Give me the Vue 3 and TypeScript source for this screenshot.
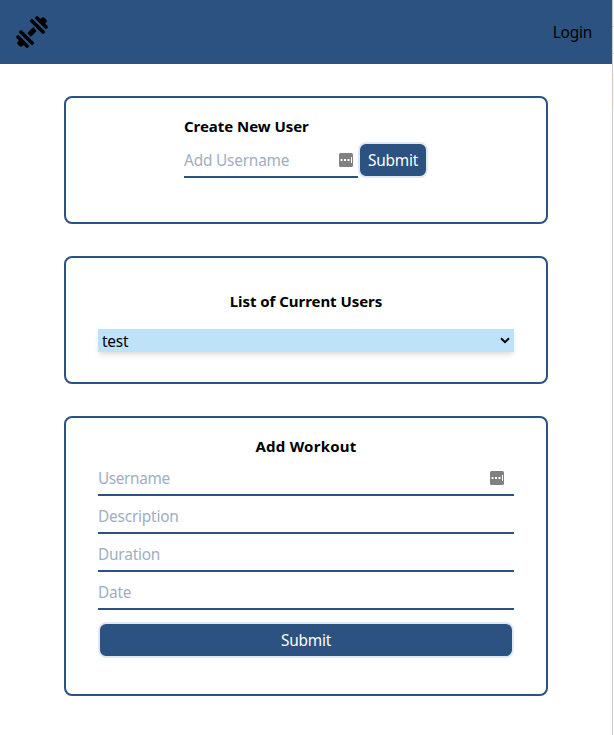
<script setup lang="ts">
import { ref, reactive } from 'vue'

type WorkoutKey = 'username' | 'description' | 'duration' | 'date'
interface Field {
  key: WorkoutKey
  label: string
}

const fields: Field[] = [
  { key: 'username', label: 'Username' },
  { key: 'description', label: 'Description' },
  { key: 'duration', label: 'Duration' },
  { key: 'date', label: 'Date' },
]
const users = ref<string[]>(['test'])
const selected = ref('test')
const newUser = ref('')
const workout = reactive<Record<WorkoutKey, string>>({
  username: '',
  description: '',
  duration: '',
  date: '',
})

function addUser(): void {
  const name = newUser.value.trim()
  if (name) users.value.push(name)
  newUser.value = ''
}
</script>

<template>
  <div class="page">
    <div class="content">
      <header class="nav">
        <svg class="logo" viewBox="0 0 32 32" fill="none" stroke="#000" stroke-linecap="round">
          <path stroke-width="3.6" d="M15.9 4.9 27.1 16.1M21 2 30 11M4.9 15.9 16.1 27.1M2 21 11 30" />
          <path stroke-width="3" stroke-linejoin="round" fill="#000" d="M24 5 27.2 2.7 29.3 4.8 27 8ZM8 27 4.8 29.3 2.7 27.2 5 24Z" />
          <path stroke-width="1.6" fill="#000" stroke-linejoin="round" d="M12.4 17.1 17.1 12.4 19.6 14.9 14.9 19.6Z" />
        </svg>
        <a class="login">Login</a>
      </header>

      <main class="cards">
        <section class="card create">
          <form class="create-form" @submit.prevent="addUser">
            <h2 class="title title-create">Create New User</h2>
            <div class="row">
              <div class="field">
                <input v-model="newUser" class="input" placeholder="Add Username" />
                <svg class="badge" viewBox="0 0 14 14">
                  <rect width="14" height="14" rx="1.5" fill="#808080" />
                  <path fill="#fff" d="M1.5 6h2v2h-2zM5 6h2v2H5zM8.5 6h2v2h-2zM12 4h1v6h-1z" />
                </svg>
              </div>
              <button class="button">Submit</button>
            </div>
          </form>
        </section>

        <section class="card users">
          <h2 class="title title-users">List of Current Users</h2>
          <div class="select-wrap">
            <select v-model="selected" class="select">
              <option v-for="user in users" :key="user">{{ user }}</option>
            </select>
            <svg class="chevron" viewBox="0 0 10 7" fill="none" stroke="#000" stroke-width="2">
              <path d="M1 1.3 5 5.1 9 1.3" />
            </svg>
          </div>
        </section>

        <section class="card workout">
          <h2 class="title title-workout">Add Workout</h2>
          <form @submit.prevent>
            <div v-for="field in fields" :key="field.key" class="field">
              <input v-model="workout[field.key]" class="input" :placeholder="field.label" />
              <svg v-if="field.key === 'username'" class="badge" viewBox="0 0 14 14">
                <rect width="14" height="14" rx="1.5" fill="#808080" />
                <path fill="#fff" d="M1.5 6h2v2h-2zM5 6h2v2H5zM8.5 6h2v2h-2zM12 4h1v6h-1z" />
              </svg>
            </div>
            <button class="button wide">Submit</button>
          </form>
        </section>
      </main>
    </div>
    <div class="edge"></div>
  </div>
</template>

<style>
body {
  background: #fff;
  overflow: hidden;
}
</style>

<style scoped>
* {
  box-sizing: border-box;
}
.page {
  display: flex;
  height: 735px;
  font: 15.4px/24px "Noto Sans", "Open Sans", sans-serif;
  letter-spacing: -0.2px;
  color: #000;
}
.content {
  width: 612px;
}
.edge {
  width: 2px;
  border-left: 1px solid #ccc;
  background: linear-gradient(#fbf5f3 26px, #ccc 26px, #ccc 27px, #fbf5f3 27px, #fbf5f3 53px, #ccc 53px, #ccc 54px, #fff 54px, #fff 74px, #fff8e7 74px, #fff8e7 107px, #fff 107px);
}
.nav {
  display: flex;
  align-items: center;
  justify-content: space-between;
  height: 64px;
  padding: 0 20px 0 16px;
  background: #2c5282;
}
.logo {
  width: 32px;
  height: 32px;
}
.login {
  padding-top: 2px;
}
.cards {
  display: flex;
  flex-direction: column;
  gap: 32px;
  padding: 32px 64px;
}
.card {
  border: 2px solid #2c5282;
  border-radius: 8px;
  padding: 16px 32px;
}
.create,
.users {
  height: 128px;
}
.create {
  display: flex;
  justify-content: center;
}
.users {
  padding-top: 31px;
}
.workout {
  height: 280px;
}
.title {
  margin: 0;
  font-size: 15px;
  line-height: 24px;
  font-weight: 700;
  letter-spacing: -0.05px;
  text-align: center;
}
.title-create {
  text-align: left;
}
.title-workout {
  letter-spacing: 0.25px;
}
.create-form {
  width: 244px;
}
.row {
  display: flex;
  align-items: flex-end;
  padding-top: 2px;
}
.row .field {
  width: 174px;
}
.row .button {
  width: 70px;
}
.field {
  position: relative;
  height: 38px;
}
.workout .field:first-child {
  height: 36px;
}
.workout form {
  padding-top: 2px;
}
.input {
  display: block;
  width: 100%;
  height: 100%;
  padding: 6px 0 2px;
  border: 0;
  border-bottom: 2px solid #2c5282;
  border-radius: 0;
  outline: 0;
  background: transparent;
  font: inherit;
  letter-spacing: inherit;
}
.workout .field:first-child .input {
  padding-top: 4px;
  letter-spacing: -0.4px;
}
.input::placeholder {
  color: #a0aec0;
  opacity: 1;
}
.badge {
  position: absolute;
  top: 13px;
  right: 5px;
  width: 14px;
  height: 14px;
}
.workout .badge {
  top: 11px;
  right: 10px;
}
.button {
  display: block;
  height: 36px;
  padding: 2px 0 0;
  border: 2px solid #e2e8f0;
  border-radius: 8px;
  background: #2c5282;
  color: #fff;
  font: inherit;
  letter-spacing: inherit;
}
.wide {
  width: 100%;
  margin-top: 12px;
}
.select-wrap {
  position: relative;
  margin-top: 16px;
}
.select {
  display: block;
  width: 100%;
  height: 23px;
  padding: 1px 4px 0;
  border: 0;
  border-radius: 0;
  appearance: none;
  background: #bee3f8;
  color: #000;
  font: inherit;
  letter-spacing: inherit;
  box-shadow: 0 4px 6px -1px rgba(0, 0, 0, 0.1), 0 2px 4px -1px rgba(0, 0, 0, 0.06);
}
.chevron {
  position: absolute;
  top: 8px;
  right: 4px;
  width: 10px;
  height: 7px;
}
</style>
